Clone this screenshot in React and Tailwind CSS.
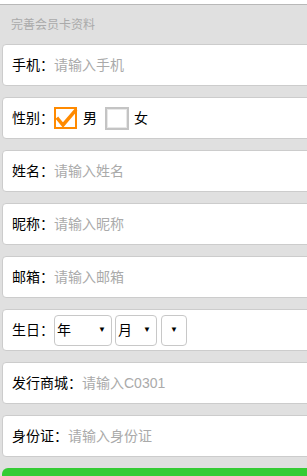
import React from 'react';

const Field = ({ label, placeholder }) => (
  <div className="h-[42px] w-[312px] shrink-0 bg-white border border-[#cccccc] rounded-[4px] flex items-center pl-[9px]">
    <span className="text-[14px] leading-none text-black">{label}</span>
    <span className="text-[14px] leading-none text-[#aaaaaa]">{placeholder}</span>
  </div>
);

const Select = ({ text, className }) => (
  <div className={`h-[31px] border border-[#c8c8c8] rounded-[4px] flex items-center justify-between pl-[2px] pr-[5px] ${className}`}>
    <span className="text-[14px] leading-none">{text}</span>
    <span className="text-[8px] leading-none">▼</span>
  </div>
);

export default function App() {
  return (
    <div
      className="w-[307px] h-[476px] overflow-hidden bg-[#e0e0e0]"
      style={{ fontFamily: '"Liberation Sans", "Noto Sans CJK SC", sans-serif' }}
    >
      <div className="h-[4px] bg-white" />
      <div className="h-[40px] border-t border-[#b8b8b8] pl-[11px] flex items-center text-[12px] leading-none text-[#aaaaaa]">
        完善会员卡资料
      </div>

      <div className="pl-[2px] flex flex-col gap-[11px]">
        <Field label="手机：" placeholder="请输入手机" />

        {/* Gender */}
        <div className="h-[42px] w-[312px] shrink-0 bg-white border border-[#cccccc] rounded-[4px] flex items-center pl-[9px]">
          <span className="text-[14px] leading-none">性别：</span>
          <div className="w-[23px] h-[22px] border-2 border-[#ff8a00] relative">
            <svg className="absolute -left-[2px] -top-[2px]" width="24" height="23" viewBox="0 0 24 23">
              <polyline
                points="4,12 9,18 21,4"
                fill="none"
                stroke="#ff8a00"
                strokeWidth="3.5"
                strokeLinecap="square"
              />
            </svg>
          </div>
          <span className="text-[14px] leading-none ml-[6px]">男</span>
          <div className="w-[24px] h-[23px] border-2 border-[#c4c4c4] ml-[8px] shadow-[inset_0_0_0_1px_#e8e8e8]" />
          <span className="text-[14px] leading-none ml-[5px]">女</span>
        </div>

        <Field label="姓名：" placeholder="请输入姓名" />
        <Field label="昵称：" placeholder="请输入昵称" />
        <Field label="邮箱：" placeholder="请输入邮箱" />

        {/* Birthday */}
        <div className="h-[42px] w-[312px] shrink-0 bg-white border border-[#cccccc] rounded-[4px] flex items-center pl-[9px]">
          <span className="text-[14px] leading-none">生日：</span>
          <Select text="年" className="w-[58px]" />
          <Select text="月" className="w-[42px] ml-[3px]" />
          <Select text="" className="w-[26px] ml-[4px] pr-[8px]" />
        </div>

        <Field label="发行商城：" placeholder="请输入C0301" />
        <Field label="身份证：" placeholder="请输入身份证" />

        <div className="h-[40px] w-[312px] shrink-0 bg-[#35cc35] rounded-t-[6px]" />
      </div>
    </div>
  );
}
